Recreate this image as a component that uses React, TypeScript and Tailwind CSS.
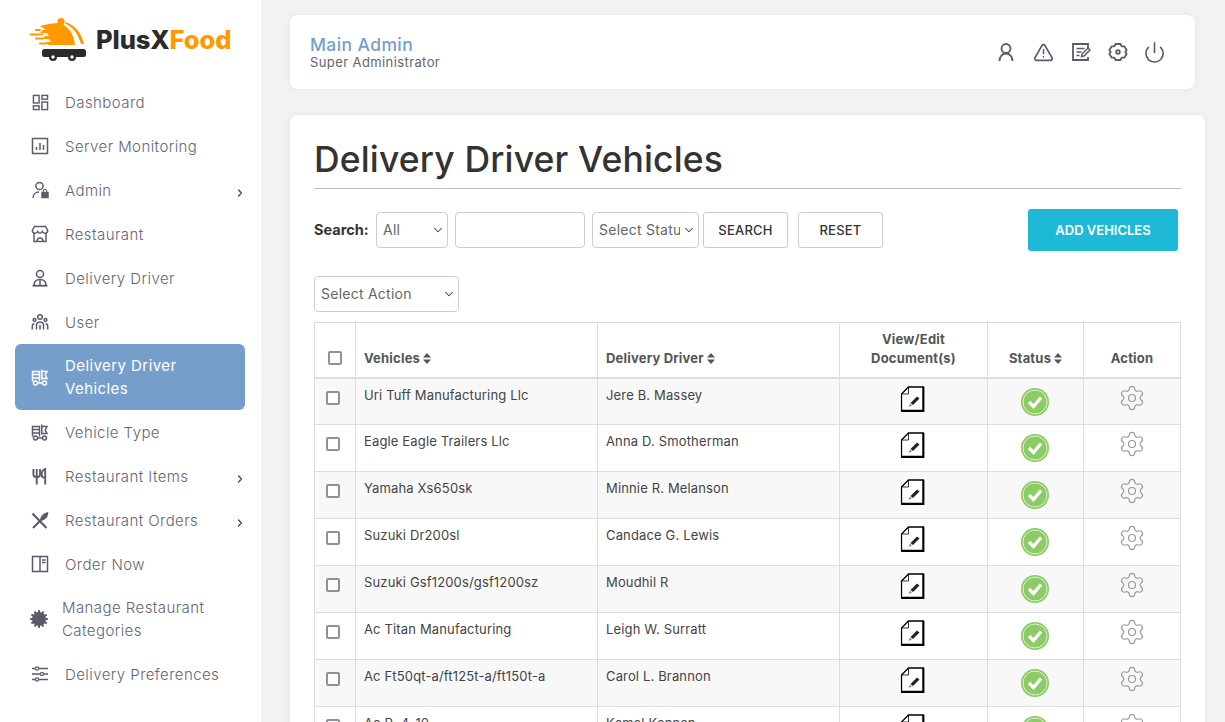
import React from "react";
import { ChevronRight, ChevronDown, Settings, TriangleAlert, Power } from "lucide-react";

const S = ({ children, className = "w-[18px] h-[18px]" }: { children: React.ReactNode; className?: string }) => (
  <svg viewBox="0 0 18 18" fill="none" stroke="currentColor" strokeWidth="1.5" className={className}>{children}</svg>
);

const Dash = () => <S className="w-[17px] h-[17px]"><rect x="1.500" y="1.500" width="6" height="8" /><rect x="10.500" y="1.500" width="6" height="4" /><rect x="1.500" y="12.500" width="6" height="4" /><rect x="10.500" y="8.500" width="6" height="8" /></S>;
const Mon = () => <S><rect x="1.500" y="1.500" width="15" height="15" /><path d="M5.500 13v-3M9 13V6M12.500 13V8" /></S>;
const Admin = () => <S className="w-[20px] h-[22px]"><circle cx="8.500" cy="5" r="3.600" /><path d="M2 17c0-3.500 2.500-6 6-6" /><rect x="11" y="11.500" width="6" height="5" fill="currentColor" /><path d="M12.300 11.500V10a1.700 1.700 0 0 1 3.400 0v1.500" strokeWidth="1.100" /></S>;
const Rest = () => <S className="w-[20px] h-[20px]"><path d="M3 8v8.500h12V8" /><path d="M1.300 5.500 3.500 1.500h11l2.200 4c0 1.600-1.200 2.700-2.700 2.700-1.200 0-2.300-.8-2.700-1.700-.4.900-1.100 1.700-2.300 1.700s-1.900-.8-2.300-1.700c-.4.900-1.500 1.700-2.700 1.700-1.500 0-2.700-1.100-2.700-2.700Z" /><path d="M6 16.500c0-2.500 1-3.500 3-3.500s3 1 3 3.500" /></S>;
const Driver = () => <S className="w-[20px] h-[20px]"><circle cx="9" cy="5" r="3.500" /><path d="M3 16.500c0-4 2.500-6 6-6s6 2 6 6Z" /><path d="M9 10.500v6M1.500 16.800h15" /></S>;
const Users = () => <S className="w-[20px] h-[20px]"><circle cx="9" cy="4" r="2.300" /><circle cx="3.500" cy="7" r="1.400" /><circle cx="14.500" cy="7" r="1.400" /><path d="M5.500 16.500v-4c0-2.300 1.500-3.500 3.500-3.500s3.500 1.200 3.500 3.500v4M9 12v4.500M1.300 16.500v-3.500c0-1.300.8-2.300 2-2.300M16.700 16.500v-3.500c0-1.300-.8-2.300-2-2.300" /></S>;
const Truck = () => <S className="w-[20px] h-[20px]"><path d="M1.500 13.500V3.500h7v10M1.500 6.500h7M1.500 10h7M10.800 1.500v10M10.800 3.500h5.200l-1.800 3.500 1.800 3.500h-5.200" /><circle cx="4.500" cy="15" r="2" /><circle cx="13.500" cy="15" r="2" /><path d="M6.500 15h5" /></S>;
const Fork = () => <S className="w-[17px] h-[19px]"><path d="M1.500 1v6c0 1.800 1.200 2.800 3.500 2.800S8.500 8.800 8.500 7V1M5 1v16.500" strokeWidth="2" /><path d="M14 17.500V1c-3 1-3.800 3.500-3.800 6.500 0 1.800.8 3 3.800 3" strokeWidth="2" /></S>;
const Cross = () => <S className="w-[19px] h-[19px]"><path d="M1.500 2 15.500 16.500" strokeWidth="2.200" /><path d="M2 16.500 10.500 8" strokeWidth="2.200" /><path d="M10 7.500c.5-2.500 3-5 6.500-6-.3 3.500-2.500 6-5 6.700Z" fill="currentColor" /></S>;
const Book = () => <S><rect x="1.500" y="1.500" width="15" height="15" /><path d="M9 1.500v15M11 5h3.500M11 7.500h3.500" /></S>;
const Badge = () => (
  <svg viewBox="0 0 18 18" className="w-[18px] h-[18px]" fill="currentColor">
    <circle cx="9" cy="9" r="7" />
    {[0, 30, 60, 90, 120, 150, 180, 210, 240, 270, 300, 330].map((a) => (
      <rect key={a} x="8" y="0.200" width="2" height="3" transform={`rotate(${a} 9 9)`} />
    ))}
  </svg>
);
const Sliders = () => <S><path d="M1 3.500h16M1 9h16M1 14.500h16" strokeWidth="1.300" /><circle cx="6" cy="3.500" r="1.600" fill="#fff" strokeWidth="1.200" /><circle cx="11" cy="9" r="1.600" fill="#fff" strokeWidth="1.200" /><circle cx="6" cy="14.500" r="1.600" fill="#fff" strokeWidth="1.200" /></S>;

const Logo = () => (
  <svg viewBox="0 0 57 46" className="w-[57px] h-[46px] shrink-0">
    <circle cx="32" cy="4.500" r="3.500" fill="#ff9900" />
    <path d="M11 9 C18 7 25 6 31 6 C39 9 45 17 46 28 H19 L17 25 H22 L20 22 H14 L16 19 H20 L18 16 H11 L14 13 H17 Z" fill="#ff9900" />
    <path d="M36 5 C46 8 52 15 55 27 L52 27 C49 17 44 10 36 6.500Z" fill="#ff9900" />
    <path d="M7 13h4M1.500 17.500h12M7 21.500h7M11 26.500h6" stroke="#ff9900" strokeWidth="2" strokeLinecap="round" fill="none" />
    <rect x="13" y="32" width="44" height="8" rx="2.500" fill="#2b2b2b" />
    <circle cx="24" cy="40" r="4" fill="#2b2b2b" /><circle cx="24" cy="40" r="1.700" fill="#fff" />
    <circle cx="43" cy="40" r="4" fill="#2b2b2b" /><circle cx="43" cy="40" r="1.700" fill="#fff" />
  </svg>
);

const menu: { label: React.ReactNode; icon: React.ReactNode; arrow?: boolean; two?: boolean; active?: boolean; tight?: boolean }[] = [
  { label: "Dashboard", icon: <Dash /> },
  { label: "Server Monitoring", icon: <Mon /> },
  { label: "Admin", icon: <Admin />, arrow: true },
  { label: "Restaurant", icon: <Rest /> },
  { label: "Delivery Driver", icon: <Driver /> },
  { label: "User", icon: <Users /> },
  { label: <>Delivery Driver<br />Vehicles</>, icon: <Truck />, two: true, active: true },
  { label: "Vehicle Type", icon: <Truck /> },
  { label: "Restaurant Items", icon: <Fork />, arrow: true },
  { label: "Restaurant Orders", icon: <Cross />, arrow: true },
  { label: "Order Now", icon: <Book /> },
  { label: <>Manage Restaurant<br />Categories</>, icon: <Badge />, two: true, tight: true },
  { label: "Delivery Preferences", icon: <Sliders /> },
];

const rows: [string, string][] = [
  ["Uri Tuff Manufacturing Llc", "Jere B. Massey"],
  ["Eagle Eagle Trailers Llc", "Anna D. Smotherman"],
  ["Yamaha Xs650sk", "Minnie R. Melanson"],
  ["Suzuki Dr200sl", "Candace G. Lewis"],
  ["Suzuki Gsf1200s/gsf1200sz", "Moudhil R"],
  ["Ac Titan Manufacturing", "Leigh W. Surratt"],
  ["Ac Ft50qt-a/ft125t-a/ft150t-a", "Carol L. Brannon"],
  ["Ac R. 4-10", "Kamal Kannan"],
];

const Sort = () => (
  <svg viewBox="0 0 8 11" className="inline-block w-[8px] h-[11px] ml-[3px] align-[-1px]" fill="#555">
    <path d="M4 0 8 4.500H0ZM4 11 0 6.500H8Z" />
  </svg>
);

const Doc = () => (
  <svg viewBox="0 0 24 26" className="w-[24px] h-[26px] mx-auto -translate-x-[1.500px]">
    <path d="M8 1H23V25H1V8Z" fill="#fff" stroke="#000" strokeWidth="1.300" />
    <path d="M8 1V8H1" fill="none" stroke="#000" strokeWidth="0.800" />
    <path d="M16.500 10.500 19 12.500 12.500 19 10 17Z" fill="#222" />
    <path d="M9.500 17.500 8 21l3.500-1.500Z" fill="#888" />
    <path d="M23 1V25H1" fill="none" stroke="#000" strokeWidth="2.400" />
  </svg>
);

const Check = () => (
  <svg viewBox="0 0 28 28" className="w-[28px] h-[28px] mx-auto -translate-x-[1px]">
    <circle cx="14" cy="14" r="14" fill="#8ccb66" />
    <circle cx="14" cy="14" r="12" fill="#8ccb66" stroke="#dff0d2" strokeWidth="1" />
    <path d="M8 14 12.500 18.500 20 9.500" fill="none" stroke="#fff" strokeWidth="3.400" />
  </svg>
);

const Person = () => (
  <svg viewBox="0 0 20 20" className="w-[20px] h-[20px]" fill="none" stroke="currentColor" strokeWidth="1.800">
    <circle cx="10" cy="6.500" r="4.500" />
    <path d="M3.500 19c0-4.500 2.800-7.500 6.500-7.500s6.500 3 6.500 7.500" />
  </svg>
);

const HexGear = () => (
  <svg viewBox="0 0 20 20" className="w-[20px] h-[20px]" fill="none" stroke="currentColor" strokeWidth="1.800">
    <path d="M7.500 2h5l1.200 2.400 2.600-.1 2.400 3.900-1.500 1.800 1.500 1.800-2.400 3.900-2.600-.1L12.500 18h-5l-1.200-2.400-2.600.1-2.400-3.900L2.800 10 1.300 8.200l2.400-3.900 2.600.1Z" strokeLinejoin="round" />
    <circle cx="10" cy="10" r="1.800" />
  </svg>
);

const Note = () => (
  <svg viewBox="0 0 20 20" className="w-[20px] h-[20px]" fill="none" stroke="currentColor" strokeWidth="1.800">
    <path d="M17 8V2H2v16h15v-3" />
    <path d="M5.500 6.500h8M5.500 10h5M5.500 13.500h3" strokeWidth="1.500" />
    <path d="M10.500 14.500 11 12l6-6 2 2-6 6Z" fill="#fff" strokeWidth="1.500" />
  </svg>
);

const Sel = ({ w, label, cls = "" }: { w: string; label: string; cls?: string }) => (
  <span className={`relative inline-block h-[36px] ${w} ${cls}`}>
    <select className="appearance-none w-full h-full rounded-[4px] border border-[#ccc] bg-white text-[#666] text-[14px] tracking-[0.25px] pl-[6px] pr-[18px] pb-[2px]">
      <option>{label}</option>
    </select>
    <ChevronDown className="absolute right-[3px] top-[11px] w-[14px] h-[14px] text-[#444] pointer-events-none" strokeWidth={1.800} />
  </span>
);

const cb = "appearance-none block w-[14px] h-[14px] border-2 border-[#8f8f9d] rounded-[2px] bg-white mx-auto";
const th = "border border-[#ddd] border-b-2 align-bottom";
const td = "border border-[#ddd] align-top";

export default function App() {
  return (
    <div className="flex h-[722px] w-[1225px] overflow-hidden bg-[#f2f2f2] font-['Inter',sans-serif] text-[#444]">
      <aside className="w-[261px] shrink-0 bg-white px-[15px]">
        <div className="h-[80px] flex items-start pl-[14px] pt-[17px] gap-[10px]">
          <Logo />
          <div className="text-[25.500px] font-extrabold leading-[46px] tracking-[-0.1px]">
            <span className="text-[#2b2b2b]">PlusX</span><span className="text-[#ff9900]">Food</span>
          </div>
        </div>
        <nav className="w-[230px]">
          {menu.map((m, i) => (
            <div
              key={i}
              className={`flex items-center rounded-[6px] ${m.two ? "h-[66px]" : "h-[44px]"} ${m.tight ? "pl-[15px]" : "pl-[16px]"} ${m.active ? "bg-[#759ecb] text-white" : "text-[#5b5b6b]"}`}
            >
              <span className={`flex justify-center items-center shrink-0 ${m.tight ? "w-[18px] mr-[14px]" : "w-[18px] mr-[16px]"}`}>{m.icon}</span>
              <span className={`flex-1 text-[15px] leading-[23px] font-light tracking-[0.43px] ${m.active ? "text-white font-normal" : "text-[#666672]"}`}>{m.label}</span>
              {m.arrow && <ChevronRight className="w-[12px] h-[12px] mr-[-1px] mt-[5px] text-[#444]" strokeWidth={2.500} />}
            </div>
          ))}
        </nav>
      </aside>
      <main className="flex-1 pl-[29px] pt-[15px] min-w-0">
        <header className="w-[905px] h-[74px] bg-white rounded-[8px] shadow-[0_0_8px_rgba(0,0,0,0.05)] flex items-center justify-between pl-[20px] pr-[30px]">
          <div>
            <div className="text-[#759ecb] text-[17.500px] leading-[20px] font-medium tracking-[0.4px]">Main Admin</div>
            <div className="text-[#666] text-[13px] leading-[15px] tracking-[0.4px]">Super Administrator</div>
          </div>
          <div className="flex items-center gap-[17px] text-[#5b5b6b]">
            <Person />
            <TriangleAlert className="w-[21px] h-[21px]" strokeWidth={1.800} />
            <Note />
            <HexGear />
            <Power className="w-[23px] h-[23px] ml-[-2px] mr-[-1px]" strokeWidth={1.700} />
          </div>
        </header>
        <section className="w-[915px] mt-[26px] h-[700px] bg-white rounded-[8px] px-[24px] shadow-[0_0_8px_rgba(0,0,0,0.05)]">
          <div className="h-[74px] pt-[17px] flex items-center border-b border-[#bbb]">
            <h1 className="text-[35.500px] leading-[44px] font-medium text-[#333] tracking-[0.15px]">Delivery Driver Vehicles</h1>
          </div>
          <div className="mt-[20px] flex items-center h-[42px] pr-[3px]">
            <span className="text-[14.500px] font-bold text-[#333] w-[62px] shrink-0">Search:</span>
            <Sel w="w-[72px]" label="All" />
            <input className="ml-[7px] w-[130px] h-[36px] rounded-[4px] border border-[#ccc] bg-white" />
            <Sel w="w-[107px]" label="Select Status" cls="ml-[7px]" />
            <button className="ml-[4px] w-[85px] h-[36px] pt-[1px] rounded-[3px] border border-[#ccc] bg-white text-[13px] font-medium text-[#333] tracking-[0.2px]">SEARCH</button>
            <button className="ml-[10px] w-[85px] h-[36px] pt-[1px] rounded-[3px] border border-[#ccc] bg-white text-[13px] font-medium text-[#333] tracking-[0.2px]">RESET</button>
            <button className="ml-auto w-[150px] h-[42px] pt-[2px] rounded-[3px] bg-[#1fb9d8] text-white text-[13px] font-semibold">ADD VEHICLES</button>
          </div>
          <Sel w="w-[145px] block mt-[25px]" label="Select Action" />
          <table className="mt-[10px] w-[867px] table-fixed border-collapse text-[13px] tracking-[0.15px]">
            <colgroup>
              <col className="w-[41px]" /><col className="w-[242px]" /><col className="w-[242px]" /><col className="w-[148px]" /><col className="w-[96px]" /><col className="w-[97px]" />
            </colgroup>
            <thead>
              <tr className="h-[55px] text-[#555] text-[13px] font-bold tracking-[0.2px]">
                <th className={`${th} pb-[12px]`}><input type="checkbox" className={cb} /></th>
                <th className={`${th} pb-[8px] px-[8px] text-left`}>Vehicles<Sort /></th>
                <th className={`${th} pb-[8px] px-[8px] text-left`}>Delivery Driver<Sort /></th>
                <th className={`${th} pb-[9px] leading-[19px]`}>View/Edit<br />Document(s)</th>
                <th className={`${th} pb-[8px]`}>Status<Sort /></th>
                <th className={`${th} pb-[8px]`}>Action</th>
              </tr>
            </thead>
            <tbody>
              {rows.map((r, i) => (
                <tr key={i} className={`h-[47px] ${i % 2 === 0 ? "bg-[#f8f8f8]" : "bg-white"}`}>
                  <td className={`${td} pt-[12px]`}><input type="checkbox" className={`${cb} -translate-x-[2px]`} /></td>
                  <td className={`${td} pt-[7px] px-[8px] text-[#444] leading-[19px]`}>{r[0]}</td>
                  <td className={`${td} pt-[7px] px-[8px] text-[#444] leading-[19px]`}>{r[1]}</td>
                  <td className={`${td} pt-[7px]`}><Doc /></td>
                  <td className={`${td} pt-[9px]`}><Check /></td>
                  <td className={`${td} pt-[5px]`}><Settings className="w-[28px] h-[28px] mx-auto text-[#999]" strokeWidth={1} /></td>
                </tr>
              ))}
            </tbody>
          </table>
        </section>
      </main>
    </div>
  );
}
